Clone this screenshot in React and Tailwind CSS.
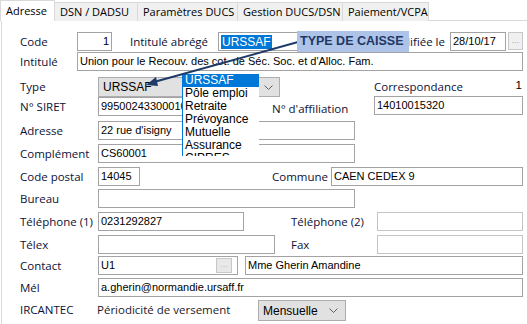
const label = 'font-["Open_Sans",sans-serif] text-[11.5px] text-[#0c1236] whitespace-nowrap';
const field = 'h-[19px] border border-[#a3a3a3] bg-white font-["Liberation_Sans",Arial,sans-serif] text-[11px] text-black leading-[17px] px-[2px] whitespace-nowrap overflow-hidden';

function Chevron() {
  return (
    <svg width="9" height="5" viewBox="0 0 9 5" className="shrink-0">
      <path d="M0.5 0.5 L4.5 4.5 L8.5 0.5" fill="none" stroke="#606060" strokeWidth="1" />
    </svg>
  );
}

function Tab({ children, active, w }) {
  if (active) {
    return (
      <div className={`${w} h-[21px] bg-white border border-b-0 border-[#d9d9d9] flex items-center pl-[5px] font-["Open_Sans",sans-serif] text-[11px] text-black relative z-10`}>
        {children}
      </div>
    );
  }
  return (
    <div className={`${w} h-[19px] bg-[#f0f0f0] border border-b-0 border-l-0 border-[#d9d9d9] flex items-center pl-[5px] font-["Open_Sans",sans-serif] text-[11px] text-black`}>
      {children}
    </div>
  );
}

function Row({ h, children }) {
  return <div className={`${h} flex items-start`}>{children}</div>;
}

export default function App() {
  const list = ['URSSAF', 'Pôle emploi', 'Retraite', 'Prévoyance', 'Mutuelle', 'Assurance', 'CIPRES'];
  return (
    <div className="relative w-[527px] h-[324px] overflow-hidden bg-white">
      <div className="flex items-end h-[21px]">
        <Tab active w="w-[55px]">Adresse</Tab>
        <Tab w="w-[83px]">DSN / DADSU</Tab>
        <Tab w="w-[100px]">Paramètres DUCS</Tab>
        <Tab w="w-[105px]">Gestion DUCS/DSN</Tab>
        <Tab w="w-[86px]">Paiement/VCPA</Tab>
      </div>
      <div className="-mt-px ml-px border-l border-t border-[#d9d9d9] h-[304px] pl-[18px] pr-[4px] pt-[11px]">
        <Row h="h-[20px]">
          <div className={`${label} w-[57px] leading-[19px]`}>Code</div>
          <div className={`${field} w-[35px] text-right`}>1</div>
          <div className={`${label} ml-[18px] w-[88px] leading-[19px]`}>Intitulé abrégé</div>
          <div className={`${field} w-[82px] pt-px`}>
            <span className="bg-[#0078d7] text-white px-px text-[12px]">URSSAF</span>
          </div>
          <div className="flex-1" />
          <div className={`${label} leading-[19px]`}>Modifiée le</div>
          <div className={`${field} ml-[5px] w-[56px] text-[11.5px]`}>28/10/17</div>
          <div className="ml-[2px] w-[15px] h-[18px] border border-[#c8c8c8] bg-[#f0f0f0] text-[#a0a0a0] text-[9px] leading-[14px] text-center font-['Liberation_Sans',sans-serif]">...</div>
        </Row>
        <Row h="h-[25px]">
          <div className={`${label} w-[57px] leading-[19px]`}>Intitulé</div>
          <div className={`${field} flex-1`}>Union pour le Recouv. des cot. de Séc. Soc. et d'Alloc. Fam.</div>
        </Row>
        <Row h="h-[20px]">
          <div className={`${label} w-[78px] leading-[20px]`}>Type</div>
          <div className="w-[182px] h-[20px] border border-[#adadad] bg-[#e1e1e1] flex items-center justify-between pl-[4px] pr-[6px] font-['Liberation_Sans',Arial,sans-serif] text-[12px]">
            <span>URSSAF</span>
            <Chevron />
          </div>
          <div className={`${label} ml-[94px] leading-[20px]`}>Correspondance</div>
          <div className="flex-1" />
          <div className="font-['Liberation_Sans',sans-serif] text-[11.5px] leading-[16px] pr-[1px]">1</div>
        </Row>
        <Row h="h-[24px]">
          <div className={`${label} w-[78px] leading-[19px]`}>N° SIRET</div>
          <div className={`${field} w-[110px]`}>99500243300010</div>
          <div className={`${label} ml-[64px] w-[102px] leading-[19px] pt-[2px]`}>N° d'affiliation</div>
          <div className={`${field} flex-1 -mt-px`}>14010015320</div>
        </Row>
        <Row h="h-[23px]">
          <div className={`${label} w-[78px] leading-[19px]`}>Adresse</div>
          <div className={`${field} w-[257px]`}>22 rue d'isigny</div>
        </Row>
        <Row h="h-[23px]">
          <div className={`${label} w-[78px] leading-[19px]`}>Complément</div>
          <div className={`${field} w-[257px]`}>CS60001</div>
        </Row>
        <Row h="h-[22px]">
          <div className={`${label} w-[78px] leading-[19px]`}>Code postal</div>
          <div className={`${field} w-[42px]`}>14045</div>
          <div className={`${label} ml-[132px] w-[59px] leading-[19px]`}>Commune</div>
          <div className={`${field} flex-1`}>CAEN CEDEX 9</div>
        </Row>
        <Row h="h-[23px]">
          <div className={`${label} w-[78px] leading-[19px]`}>Bureau</div>
          <div className={`${field} w-[257px]`}></div>
        </Row>
        <Row h="h-[23px]">
          <div className={`${label} w-[78px] leading-[19px]`}>Téléphone (1)</div>
          <div className={`${field} w-[146px]`}>0231292827</div>
          <div className={`${label} ml-[47px] w-[86px] leading-[19px]`}>Téléphone (2)</div>
          <div className={`${field} flex-1 border-[#c4c4c4]`}></div>
        </Row>
        <Row h="h-[21px]">
          <div className={`${label} w-[78px] leading-[19px]`}>Télex</div>
          <div className={`${field} w-[177px]`}></div>
          <div className={`${label} ml-[16px] w-[86px] leading-[19px]`}>Fax</div>
          <div className={`${field} flex-1 border-[#c4c4c4]`}></div>
        </Row>
        <Row h="h-[22px]">
          <div className={`${label} w-[78px] leading-[19px]`}>Contact</div>
          <div className={`${field} w-[140px] flex items-center justify-between pr-[5px]`}>
            <span>U1</span>
            <span className="w-[16px] h-[15px] border border-[#c8c8c8] bg-[#e8e8e8] text-[#b0b0b0] text-[8px] leading-[11px] text-center">...</span>
          </div>
          <div className={`${field} ml-[7px] flex-1`}>Mme Gherin Amandine</div>
        </Row>
        <Row h="h-[22px]">
          <div className={`${label} w-[78px] leading-[19px]`}>Mél</div>
          <div className={`${field} flex-1`}>a.gherin@normandie.ursaff.fr</div>
        </Row>
        <Row h="h-[22px]">
          <div className={`${label} w-[77px] leading-[20px]`}>IRCANTEC</div>
          <div className={`${label} w-[161px] leading-[20px] text-[#1a1a2a]`}>Périodicité de versement</div>
          <div className="w-[88px] h-[21px] border border-[#adadad] bg-[#e1e1e1] flex items-center justify-between pl-[4px] pr-[7px] font-['Liberation_Sans',Arial,sans-serif] text-[12px]">
            <span>Mensuelle</span>
            <Chevron />
          </div>
        </Row>
      </div>

      <div className="absolute left-[182px] top-[74px] w-[77px] h-[82px] overflow-hidden bg-white border-l border-[#0078d7] font-['Liberation_Sans',Arial,sans-serif] text-[12px]">
        {list.map((item, i) => (
          <div key={item} className={`h-[13px] leading-[13px] pl-[2px] ${i === 0 ? 'bg-[#0078d7] text-white' : 'text-black'}`}>
            {item}
          </div>
        ))}
      </div>

      <svg className="absolute left-0 top-0 pointer-events-none" width="527" height="324">
        <line x1="298" y1="42" x2="154" y2="82" stroke="#1f3a68" strokeWidth="2" />
        <polygon points="146,85 156,77 158,86" fill="#1f3a68" />
      </svg>

      <div className="absolute left-[297px] top-[31px] w-[112px] h-[21px] bg-[#aec3e8] flex items-center pl-[3px] font-['Liberation_Sans',Arial,sans-serif] font-bold text-[12.5px] text-[#1f3864]">
        TYPE DE CAISSE
      </div>
    </div>
  );
}
